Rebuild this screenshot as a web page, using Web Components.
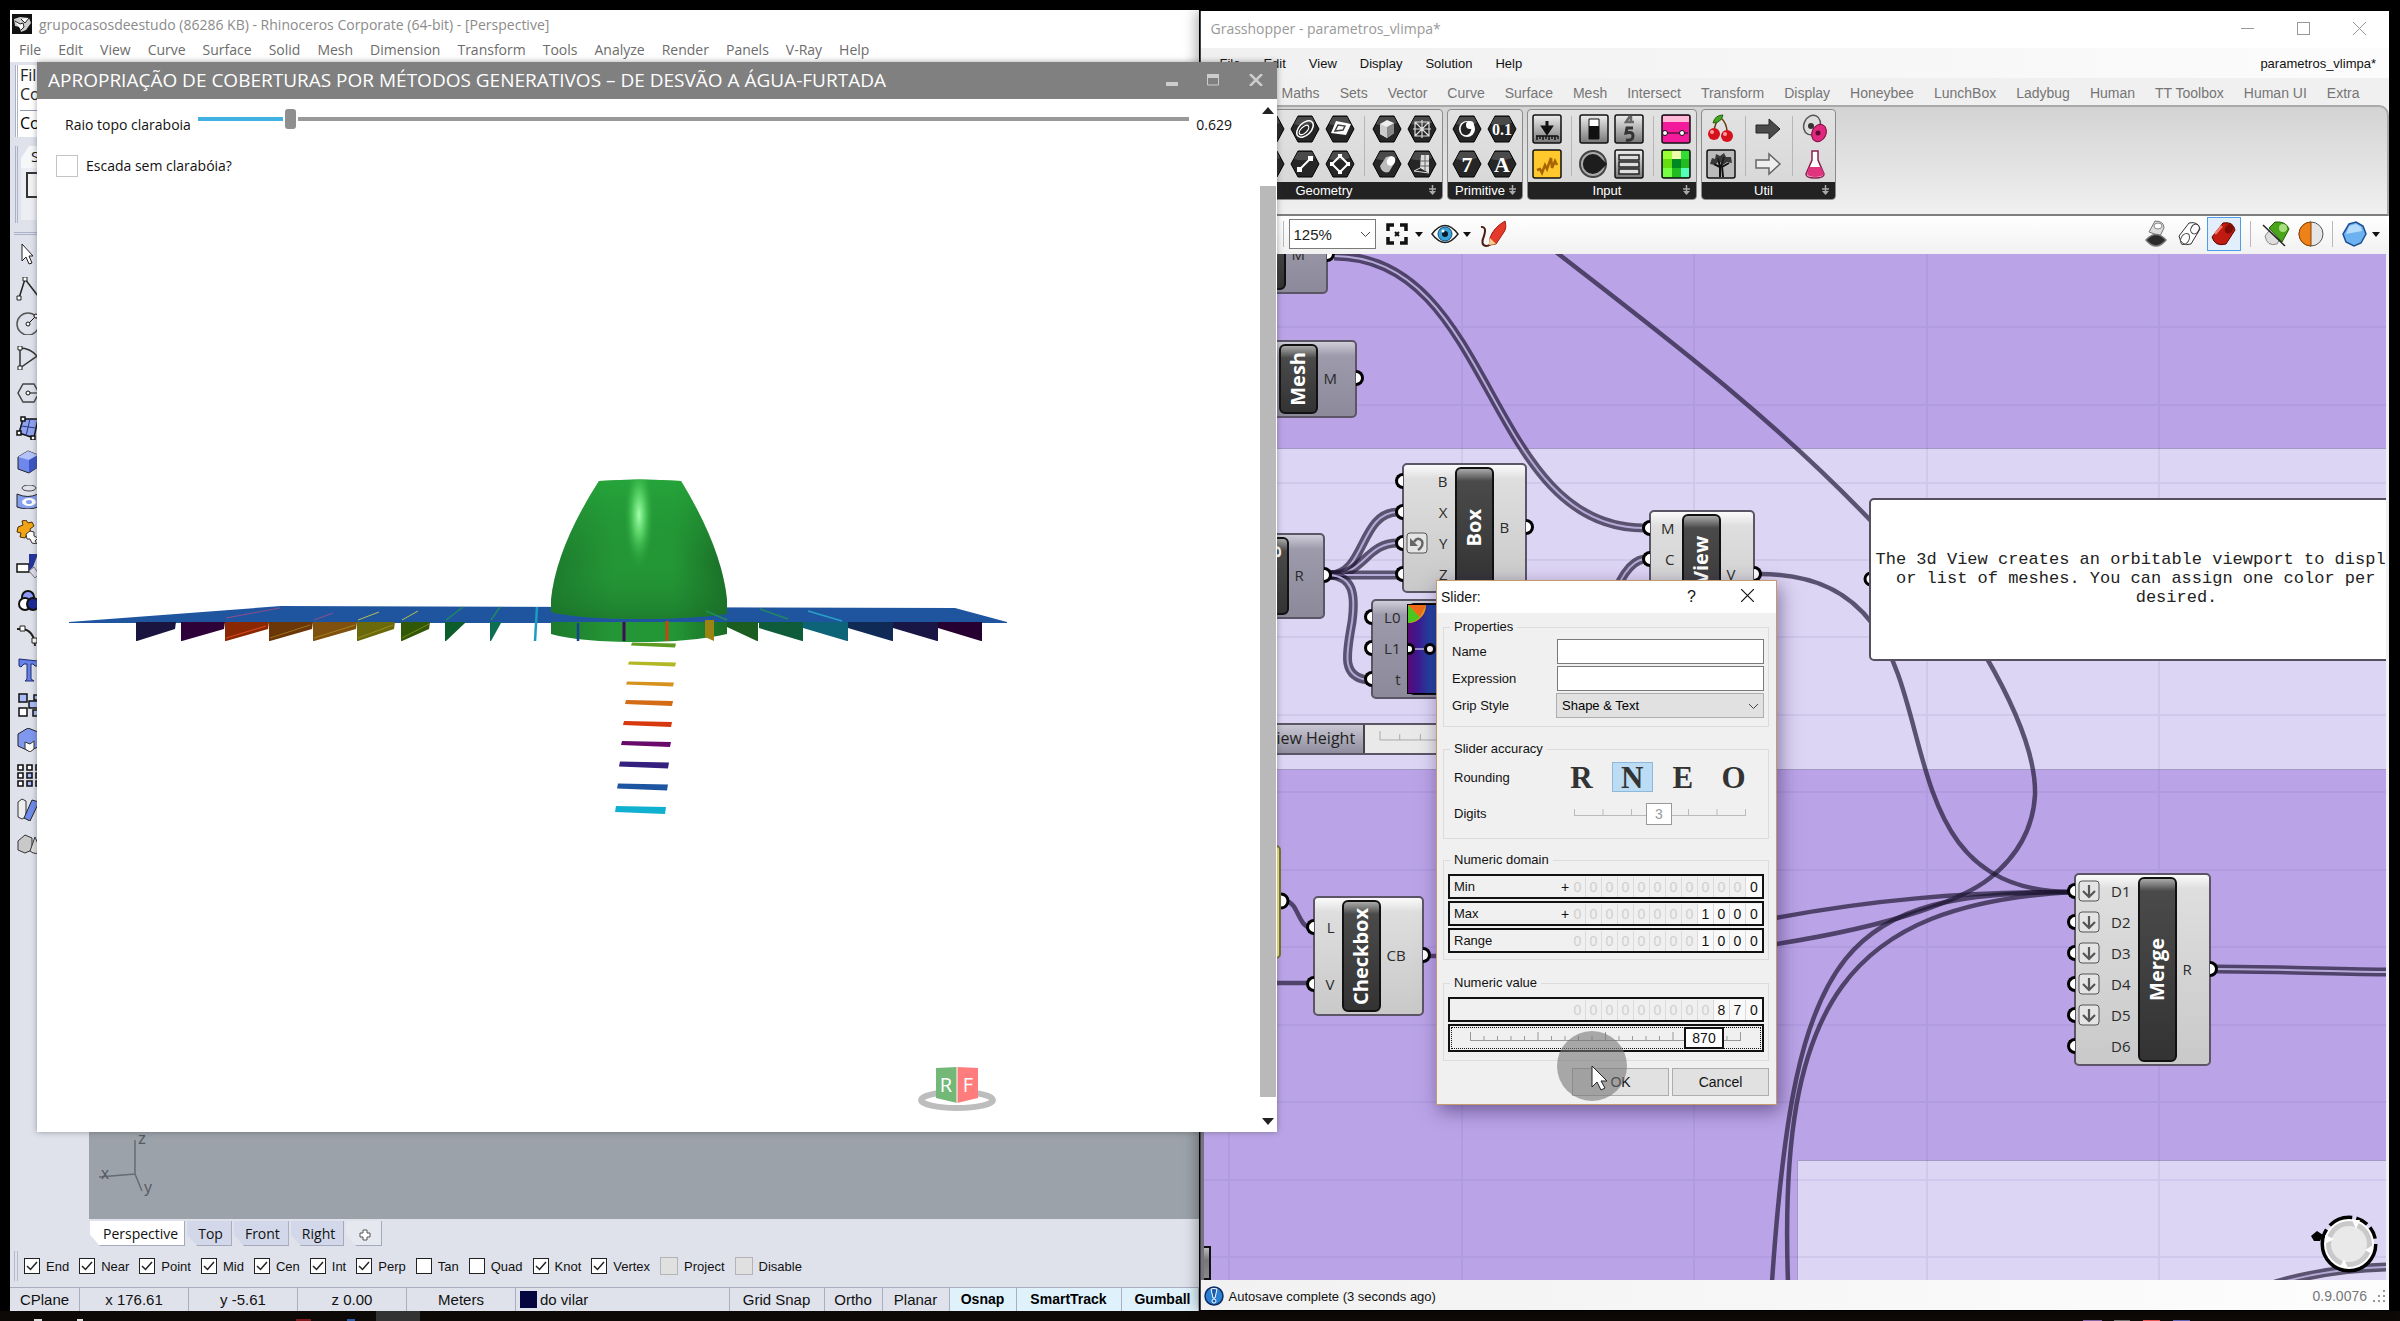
<!DOCTYPE html>
<html lang="pt">
<head>
<meta charset="utf-8">
<title>Grasshopper - parametros_vlimpa*</title>
<style>
html,body{margin:0;height:100%;background:#000;overflow:hidden}
body{font-family:"Liberation Sans",sans-serif;font-size:14px;color:#111}
</style>
</head>
<body>
<desk-top></desk-top>
<script>
const define=(name,css,html,setup)=>customElements.define(name,class extends HTMLElement{
  constructor(){
    super();
    this.attachShadow({mode:'open'});
  }
  connectedCallback(){
    if(this.shadowRoot.childNodes.length)return;
    const t=document.createElement('template');
    t.innerHTML='<style>*{box-sizing:border-box}'+css+'</style>'+(typeof html==='function'?html(this):html);
    this.shadowRoot.append(t.content.cloneNode(true));
    if(setup)setup(this);
  }
});

/* ---------- shared pieces ---------- */
define('menu-strip',`:host{display:flex;align-items:center;gap:var(--gap,17px);white-space:nowrap}
::slotted(button){all:unset;cursor:default}`,'<slot></slot>');

/* ---------- Rhino tool glyphs ---------- */
const tools=[
'<path d="M6 2V19L10 15L13 22L16 21L13 14H17Z" fill="#fff" stroke="#222"/>',
'<path d="M3 21L9 2L22 19" fill="none" stroke="#222" stroke-width="1.5"/><path d="M1 19h4v4h-4zM7 0h4v4h-4z" fill="#fff" stroke="#222"/>',
'<circle cx="12" cy="13" r="11" fill="none" stroke="#555" stroke-width="1.5"/><path d="M12 13L20 5" stroke="#111"/><circle cx="12" cy="13" r="2" fill="#fff" stroke="#111"/><circle cx="20" cy="5" r="2" fill="#fff" stroke="#111"/>',
'<path d="M4 2V22M4 2Q14 2 21 10L4 22" fill="none" stroke="#333" stroke-width="1.5"/><path d="M2 0h4v4h-4zM2 20h4v4h-4z" fill="#fff" stroke="#222"/>',
'<path d="M7 3H18L23 12L18 21H7L2 12Z" fill="none" stroke="#444" stroke-width="1.5"/><path d="M12 12H23" stroke="#111"/><circle cx="12" cy="12" r="2" fill="#fff" stroke="#111"/>',
'<path d="M7 3H22L18 22L3 17Z" fill="#8ea2ee" stroke="#111" stroke-width="1.5"/><path d="M14 3L10 20M5 10L20 12" stroke="#2a3580"/><path d="M5 1h4v4h-4zM1 15h4v4h-4zM15 20h4v4h-4z" fill="#fff" stroke="#111" stroke-width="1.5"/>',
'<path d="M2 7L12 1L22 5V17L13 23L2 19Z" fill="#6d88ea" stroke="#222"/><path d="M2 7L12 1L22 5L13 10Z" fill="#b4c4fa"/><path d="M13 10V23L22 17V5Z" fill="#3c55c4"/>',
'<ellipse cx="13" cy="3" rx="7" ry="3" fill="none" stroke="#444"/><path d="M1 9Q12 14 22 9V22Q12 26 1 22Z" fill="#86a0f0" stroke="#222"/><ellipse cx="13" cy="17" rx="7" ry="4" fill="#fff"/><ellipse cx="13" cy="17" rx="3" ry="2" fill="#86a0f0"/>',
'<path d="M2 7L7 5L6 1L10 0L12 3L16 2L18 6L14 9L15 13L11 14L9 18L4 17L5 13L1 12Z" fill="#f2a416" stroke="#4a3206"/><path d="M10 14L14 11L18 12V16L22 18L19 21L21 24L16 23L14 19L11 19Z" fill="#fff" stroke="#333"/>',
'<path d="M1 10h12v8H1z" fill="#fff" stroke="#111" stroke-width="1.5"/><path d="M13 0H22L17 13L13 17Z" fill="#25349c"/><path d="M13 17L18 13L23 20L19 24Z" fill="#dde" stroke="#777"/>',
'<circle cx="12" cy="8" r="6" fill="#8f9af5" stroke="#111" stroke-width="2"/><circle cx="9" cy="15" r="6" fill="#fff" stroke="#111" stroke-width="2"/><circle cx="17" cy="15" r="6" fill="#1d2b98" stroke="#111" stroke-width="2"/>',
'<path d="M1 5H6Q18 6 19 22" fill="none" stroke="#222" stroke-width="2"/><path d="M4 2h5v5h-5zM16 14h5v5h-5z" fill="#fff" stroke="#222"/>',
'<path d="M3 1L22 3V8L19 8L17 6H15V21L18 23H9L11 21V6H8L5 9L3 8Z" fill="#6682e8" stroke="#1e2a70"/>',
'<path d="M3 1h8v8H3zM13 8h9v7h-9z" fill="#a9bbf8" stroke="#111" stroke-width="1.5"/><path d="M3 15h8v8H3z" fill="#fff" stroke="#111" stroke-width="1.5"/><path d="M17 17h6v6h-6zM18 2h5v5h-5z" fill="#a9bbf8" stroke="#111" stroke-width="1.5"/>',
'<path d="M2 6L12 0L22 4V19L13 23L2 18Z" fill="#7f98ee" stroke="#222"/><path d="M9 14L14 16L18 13V21L14 24L9 21Z" fill="#fff" stroke="#333"/>',
'<g fill="#fff" stroke="#111" stroke-width="1.6"><path d="M2 2h5v5H2zM11 2h5v5h-5zM20 2h5v5h-5zM2 10h5v5H2zM20 10h5v5h-5zM2 18h5v5H2zM20 18h5v5h-5z"/><path fill="#a9bbf8" d="M11 10h5v5h-5zM11 18h5v5h-5z"/></g>',
'<path d="M2 5L6 2L10 4V20L6 22L2 20Z" fill="#eee" stroke="#333"/><path d="M16 3L23 5L14 24L8 21Z" fill="#6f8bea" stroke="#222"/>',
'<path d="M2 9L9 3L16 6V18L9 21L2 18Z" fill="#c9c9c9" stroke="#333"/><path d="M19 5L25 19Q20 24 14 19Z" fill="#ddd" stroke="#333"/>'
];
define('tool-rail',`:host{display:flex;flex-direction:column;justify-content:space-between;width:79px;height:614px;padding-left:6px;margin-top:7px}
button{all:unset;height:24px}svg{display:block}`,
tools.map((t,i)=>`<button aria-label="tool ${i+1}"><svg width="26" height="24" viewBox="0 0 26 24">${t}</svg></button>`).join(''));

const snaps=[['End',1],['Near',1],['Point',1],['Mid',1],['Cen',1],['Int',1],['Perp',1],['Tan',0],['Quad',0],['Knot',1],['Vertex',1],['Project',2],['Disable',2]];
define('osnap-bar',`:host{display:flex;align-items:center;gap:10px;height:37px;padding:0 0 5px 4px}
i{width:4px;height:30px;border:solid #b4b9cc;border-width:0 1px;margin-right:-4px}
label{display:flex;align-items:center;gap:6px;white-space:nowrap;font-size:13px}
input{appearance:none;margin:0;width:16px;height:16px;border:1px solid #222;background:#fff}
input:checked{background:#fff url("data:image/svg+xml,%3Csvg xmlns='http://www.w3.org/2000/svg' viewBox='0 0 14 14'%3E%3Cpath d='M2 7l3.5 3.500L12 3' fill='none' stroke='%23222' stroke-width='1.500'/%3E%3C/svg%3E")}
input.off{width:18px;height:18px;border-color:#b4b4b4;background:#e0e0e0}`,
'<i></i>'+snaps.map(([n,s])=>`<label><input type="checkbox" ${s===1?'checked':''} class="${s===2?'off':''}">${n}</label>`).join(''));

define('view-tabs',`:host{display:flex;gap:2px;height:31px;padding:2px 0 0 1px;font:14px "Open Sans",sans-serif}
button{all:unset;height:24px;padding:0 8px 0 11px;background:#d2d8e9;clip-path:polygon(0 0,100% 0,100% 100%,10px 100%,0 55%);text-align:center;line-height:23px;border-right:1px solid #a4a9bb;border-bottom:1px solid #a4a9bb}
button.on{background:#fff;padding:0 6px 0 13px}
button.add{background:#e6e8f0;padding:0 10px 0 13px}svg{vertical-align:middle}`,
`<button class="on">Perspective</button><button>Top</button><button>Front</button><button>Right</button><button class="add" aria-label="New viewport"><svg width="12" height="12" viewBox="0 0 12 12"><path d="M4 1h4v3h3v4H8v3H4V8H1V4h3z" fill="#fff" stroke="#555"/></svg></button>`);

define('rhino-status',`:host{display:grid;grid-template-columns:70px repeat(4,109px) 1fr 95px 58px 67px 67px 105px 77px;height:24px;border-top:1px solid #a9aec0;font-size:15px;line-height:23px;text-align:center}
span{border-right:1px solid #a9aec0;white-space:nowrap}
.on{background:#dff2fc;font-weight:700;font-size:14px;color:#000}.on:last-child{padding-left:6px}
.lay{display:flex;gap:3px;align-items:center;padding-left:4px}.lay i{width:17px;height:17px;background:#050540}`,
`<span>CPlane</span><span>x 176.61</span><span>y -5.61</span><span>z 0.00</span><span>Meters</span><span class="lay"><i></i>do vilar</span><span>Grid Snap</span><span>Ortho</span><span>Planar</span><span class="on">Osnap</span><span class="on">SmartTrack</span><span class="on">Gumball</span>`);

define('rhino-window',`:host{display:flex;flex-direction:column;flex:1;min-width:0;background:#dfe2eb;overflow:hidden}
header{display:flex;align-items:center;gap:7px;height:28px;padding-left:2px;background:#fff;font:14px "Open Sans",sans-serif;color:#8b8b8b;white-space:nowrap}
menu-strip{height:24px;background:#fff;padding:0 0 2px 9px;font:14px "Open Sans",sans-serif;color:#6c6c6c}
.cmd{margin:3px 8px 0 5px;border-left:3px double #a9b2c8;background:#fff;height:72px;padding-left:2px;font:16px/19px "Open Sans",sans-serif;color:#222;overflow:hidden}
.cmd p{margin:0;padding-top:1px}.cmd b{display:block;font-weight:400;color:#000;border-top:1px solid #8d97b0;line-height:24px;margin-top:6px}
.bar{margin:9px 0 0 5px;border-left:3px double #a9b2c8;height:77px;position:relative;padding-left:3px}
.bar span{display:block;width:70px;height:22px;padding-left:10px;background:#f6f7fb;clip-path:polygon(8px 0,100% 0,100% 100%,0 100%,0 12px);font:15px/20px "Open Sans",sans-serif}
.bar div{height:52px;background:#eceef4;padding:4px 0 0 5px}
.bar button{all:unset;width:24px;height:22px;border:2px solid #333;background:#f3f3f3}
.body{flex:1;display:flex;border-top:3px double #a9b2c8;margin:9px 0 0 4px;min-height:0}
tool-rail{margin-left:-4px}
.right{flex:1;display:flex;flex-direction:column;min-width:0}
.vp{flex:1;background:#9ca2aa;display:flex;align-items:flex-end}.vp svg{overflow:visible}
`,`<header><svg width="20" height="20" viewBox="0 0 20 20"><path d="M0 0h20v20H0z" fill="#111"/><path d="M2 5L8 3L17 4L19 9L14 16L9 18L8 13L3 12Z" fill="#ccc"/><path d="M3 7l5 3 3-1 1 4-3 3M9 5l4 4 4-5" stroke="#222" fill="#fff"/></svg><span>grupocasosdeestudo (86286 KB) - Rhinoceros Corporate (64-bit) - [Perspective]</span></header>
<menu-strip>${'File,Edit,View,Curve,Surface,Solid,Mesh,Dimension,Transform,Tools,Analyze,Render,Panels,V-Ray,Help'.split(',').map(m=>`<button>${m}</button>`).join('')}</menu-strip>
<div class="cmd"><p>Fil<br>Co</p><b>Co</b></div>
<div class="bar"><span>S</span><div><button aria-label="new"></button></div></div>
<div class="body"><tool-rail></tool-rail><div class="right"><div class="vp"><svg width="80" height="86" viewBox="89 1133 80 86"><path d="M135 1140V1174L99 1177M135 1174L142 1191" fill="none" stroke="#666c74" stroke-width="1.500"/><g fill="#565b62" font-family="Liberation Sans" font-size="16"><text x="138" y="1144">z</text><text x="101" y="1179">x</text><text x="144" y="1193">y</text></g></svg></div>
<view-tabs></view-tabs></div></div>
<osnap-bar></osnap-bar><rhino-status></rhino-status>`);

/* ---------- Grasshopper ribbon ---------- */
const hex=s=>`<svg width="30" height="28" viewBox="0 0 30 28"><path d="M8 1H22L29 14L22 27H8L1 14Z" fill="#262626" stroke="#000"/><path d="M8 2H22L25 8Q14 12 4 9Z" fill="#4a4a4a"/>${s}</svg>`;
const sq=(s,f='#8c8c8c')=>`<svg width="30" height="30" viewBox="0 0 30 30"><defs><linearGradient id="g" x2="0" y2="1"><stop stop-color="#eee"/><stop offset="1" stop-color="#777"/></linearGradient></defs><rect x="1" y="1" width="28" height="28" rx="2" fill="${f}" stroke="#111" stroke-width="1.500"/>${s}</svg>`;
const pl=s=>`<svg width="30" height="30" viewBox="0 0 30 30">${s}</svg>`;
const I={
circ:hex('<circle cx="15" cy="14" r="6" fill="none" stroke="#fff" stroke-width="2"/>'),
crv:hex('<path d="M8 20Q15 22 20 8M8 20L12 10" fill="none" stroke="#fff" stroke-width="2"/>'),
ell:hex('<ellipse cx="15" cy="14" rx="10" ry="6" transform="rotate(-45 15 14)" fill="none" stroke="#fff" stroke-width="1.500"/><ellipse cx="14" cy="15" rx="6" ry="3" transform="rotate(-45 14 15)" fill="none" stroke="#fff" stroke-width="1.300"/>'),
line:hex('<path d="M10 19L20 9" stroke="#fff" stroke-width="2"/><path d="M7 17h5v5H7zM18 6h5v5h-5z" fill="#fff"/>'),
plane:hex('<path d="M6 18L11 6L26 9L21 20Z" fill="#fff"/><path d="M10 16L13 10L20 11L18 15Z" fill="none" stroke="#444" stroke-width="1.500"/>'),
rect:hex('<path d="M15 6L23 14L15 22L7 14Z" fill="none" stroke="#fff" stroke-width="2"/><path d="M13 4h4v4h-4zM13 20h4v4h-4zM5 12h4v4h-4zM21 12h4v4h-4z" fill="#fff"/>'),
box:hex('<path d="M8 9L15 5L22 8V18L15 23L8 19Z" fill="#eee"/><path d="M8 9L15 12V23L8 19Z" fill="#ccc"/><path d="M15 12L22 8V18L15 23Z" fill="#888"/>'),
mesh:hex('<path d="M8 7h14v14H8zM15 5v18M6 14h18M8 7l14 14M22 7L8 21" fill="none" stroke="#ddd" stroke-width="1.200"/>'),
brep:hex('<path d="M8 16L14 7Q23 4 23 12L17 22Q10 24 8 16Z" fill="#bbb"/><ellipse cx="19" cy="11" rx="4" ry="5" transform="rotate(30 19 11)" fill="#fff"/>'),
srf:hex('<path d="M13 18L14 5H22V23Z" fill="#ddd"/><path d="M13 18L7 21L22 23" fill="none" stroke="#ddd"/><path d="M18 5V21M14 11H22M13 16H22" stroke="#666"/>'),
bool:hex('<circle cx="15" cy="14" r="8" fill="#fff"/><path d="M17 7a7 7 0 0 0-8 9a5 5 0 0 0 9 2q3-5-1-11" fill="#222"/><circle cx="18" cy="10" r="4" fill="#fff"/>'),
num:hex('<text x="15" y="20" fill="#fff" font-family="Liberation Serif" font-weight="700" font-size="16" text-anchor="middle">0.1</text>'),
seven:hex('<text x="15" y="22" fill="#fff" font-family="Liberation Serif" font-weight="700" font-size="22" text-anchor="middle">7</text>'),
a:hex('<text x="15" y="22" fill="#fff" font-family="Liberation Serif" font-weight="700" font-size="22" text-anchor="middle">A</text>'),
btn:sq('<path d="M15 7V15M11 13L15 19L19 13Z" stroke="#111" stroke-width="3"/><path d="M4 22H26M5 22v4M8 22v3M11 22v4M14 22v3M17 22v4M20 22v3M23 22v4M26 22v3" stroke="#111" stroke-width="1.500"/>','url(#g)'),
graf:sq('<path d="M5 21L8 20L10 24L13 16L15 20L19 9L20 19L23 12L25 16" fill="none" stroke="#a86400" stroke-width="2.500"/>','#ffc82c'),
sld:sq('<path d="M10 5H20V25H10Z" fill="#fff" stroke="#111"/><path d="M10 12H20V25H10Z" fill="#111"/>','url(#g)'),
dig:sq('<path d="M16 2L12 8H20M17 2V9" fill="none" stroke="#666" stroke-width="2.500"/><path d="M19 14H13L12 19Q19 17 19 22T12 26" fill="none" stroke="#333" stroke-width="3"/>','url(#g)'),
knob:pl('<circle cx="14" cy="15" r="13" fill="#aaa" stroke="#444" stroke-width="2"/><path d="M21 8L28 15L21 22A10 10 0 1 1 21 8" fill="#1d1d1d"/>'),
list:sq('<path d="M5 6h20v5H5zM5 13h20v5H5zM5 20h20v5H5z" fill="#ddd" stroke="#222" stroke-width="1.500"/>','url(#g)'),
grad:sq('<path d="M2 2H28V8H2Z" fill="#fcd" opacity=".9"/><path d="M3 19H27" stroke="#111"/><circle cx="4" cy="19" r="2.500" fill="#fff" stroke="#111"/><circle cx="21" cy="19" r="2.500" fill="#fff" stroke="#111"/>','#f31a9c'),
sw:sq('<path d="M2 2h9v8H2z" fill="#9f3"/><path d="M11 2h9v8h-9z" fill="#efa"/><path d="M20 2h8v8h-8z" fill="#3d3"/><path d="M2 10h9v9H2z" fill="#6d1"/><path d="M11 10h9v9h-9z" fill="#082"/><path d="M2 19h9v9H2z" fill="#7f4"/><path d="M20 19h8v9h-8z" fill="#5fb"/>','#2b2'),
cherry:pl('<path d="M8 17Q9 9 14 3Q21 9 21 18" fill="none" stroke="#6a3d12" stroke-width="1.500"/><path d="M17 1Q9 1 7 9Q15 9 17 1" fill="#43a51e" stroke="#256010"/><circle cx="8" cy="20" r="6" fill="#d5121b"/><circle cx="21" cy="22" r="6" fill="#d5121b"/><circle cx="6" cy="18" r="2" fill="#ff9a9a"/><circle cx="19" cy="20" r="2" fill="#ff9a9a"/>'),
tree:sq('<path d="M14 28L14 18L8 15M14 18L12 9M15 18L18 8M16 18L23 14M16 17L17 28Z" stroke="#111" stroke-width="2" fill="none"/><path d="M4 15L6 9L9 10L10 5L14 7L18 4L20 8L25 8L26 14L21 13L17 16L13 12L9 16Z" fill="#222" fill-opacity=".85"/>','#bbb'),
arrd:pl('<path d="M3 11H16V5L27 15L16 25V19H3Z" fill="#4a4a4a" stroke="#222"/>'),
arrl:pl('<path d="M3 11H16V5L27 15L16 25V19H3Z" fill="#eee" stroke="#666" stroke-width="1.500"/>'),
eggs:pl('<ellipse cx="12" cy="11" rx="8" ry="10" transform="rotate(25 12 11)" fill="#ddd" stroke="#555" stroke-width="1.500"/><circle cx="11" cy="12" r="3" fill="#333"/><ellipse cx="19" cy="19" rx="7" ry="9" transform="rotate(25 19 19)" fill="#e0287e" stroke="#7a0e40"/><circle cx="18" cy="19" r="2.500" fill="#5e0a30"/>'),
flask:pl('<path d="M12 2H18V11L24 25Q24 29 15 29Q6 29 6 25L12 11Z" fill="#fff" stroke="#8a1f4e" stroke-width="1.500"/><path d="M9 18H21L24 25Q22 28 15 28Q8 28 7 25Z" fill="#e0347f"/>')
};
define('ribbon-group',`:host{display:flex;flex-direction:column;height:91px;border:1px solid #8a8a8a;border-radius:4px;background:linear-gradient(#e2e2e2,#d6d6d6);overflow:hidden}
div{flex:1;display:flex;align-items:center;justify-content:center;padding:0 2px}
section{display:grid;grid-auto-flow:column;grid-template-rows:35px 35px;grid-auto-columns:35px}
button{all:unset;display:flex;align-items:center;justify-content:center}
i{width:1px;height:60px;background:#b6b6b6;margin:0 5px 0 6px}
footer{display:flex;align-items:center;height:17px;background:#222;color:#fff;font-size:13px;padding:0 5px}
footer span{flex:1;text-align:center}`,el=>{
 const sets=el.getAttribute('icons').split('|');
 return `<div>${sets.map(s=>`<section>${s.split(',').map(k=>`<button aria-label="${k}">${I[k]}</button>`).join('')}</section>`).join('<i></i>')}</div>
 <footer><span><slot></slot></span><svg width="9" height="11" viewBox="0 0 9 11"><path d="M4.500 0V9M1 4h7" stroke="#aaa" fill="none" stroke-width="1.500"/><path d="M1 6h7L4.500 10z" fill="#aaa"/></svg></footer>`;});

const car=(f,s='#444')=>`<path d="M3 16L13 3Q22 1 24 9L15 24Q5 27 3 16Z" fill="${f}" stroke="${s}"/><ellipse cx="19" cy="9" rx="4" ry="5" transform="rotate(30 19 9)" fill="#fff" fill-opacity=".5" stroke="${s}"/>`;
const down='<svg width="8" height="5" viewBox="0 0 8 5"><path d="M0 0h8L4 5z" fill="#111"/></svg>';
define('gh-toolbar',`:host{display:flex;align-items:center;height:38px;background:linear-gradient(#fff,#f1f1f1);padding:0 8px 2px 82px}
button{all:unset;display:flex;align-items:center;justify-content:center;width:34px;height:34px}
.combo{position:relative;margin:0 4px 0 5px}
select{appearance:none;width:87px;height:30px;border:1px solid #7a7a7a;background:#fff;font:15px "Liberation Sans";padding:0 4px;color:#222;display:block}
.combo svg{position:absolute;right:5px;top:12px}
i{width:1px;height:26px;background:#b9b9b9}.sp{flex:1}
.on{border:1px solid #4d9ee8;background:#e2effb;width:32px;height:32px}
.dd{width:10px;margin-right:4px}`,
`<i></i><div class="combo"><select aria-label="Zoom"><option>125%</option></select><svg width="11" height="7" viewBox="0 0 11 7"><path d="M1 1l4.500 4.500L10 1" fill="none" stroke="#444"/></svg></div>
<button aria-label="Zoom extents"><svg width="24" height="24" viewBox="0 0 24 24"><path d="M3 9V3H9M15 3H21V9M21 15V21H15M9 21H3V15" fill="none" stroke="#111" stroke-width="3.500"/><path d="M10 10l4 4M14 10l-4 4" stroke="#111" stroke-width="2"/></svg></button><button class="dd" aria-label="more">${down}</button>
<button aria-label="Preview"><svg width="28" height="20" viewBox="0 0 28 20"><path d="M1 10Q14 -7 27 10Q14 27 1 10Z" fill="#fff" stroke="#222" stroke-width="1.500"/><circle cx="14" cy="10" r="7" fill="#3aa4dc" stroke="#134a78"/><circle cx="14" cy="10" r="3" fill="#0b1826"/><circle cx="12" cy="7" r="1.500" fill="#fff"/></svg></button><button class="dd" aria-label="more">${down}</button>
<button aria-label="Sketch"><svg width="28" height="28" viewBox="0 0 28 28"><path d="M2 7Q8 6 5 16Q1 25 7 26Q12 26 14 20" fill="none" stroke="#4a1c12" stroke-width="2"/><path d="M11 18Q14 8 26 1Q28 8 25 12L17 24L11 25Z" fill="#e33a2c" stroke="#a3190e"/><path d="M11 18L10 25L17 24Z" fill="#f4cf8e"/></svg></button>
<span class="sp"></span>
<button aria-label="No preview"><svg width="26" height="28" viewBox="0 0 26 28"><path d="M6 12L12 1Q21 1 21 8L17 16Z" fill="#ddd" stroke="#777"/><ellipse cx="15" cy="6" rx="4" ry="3" fill="#fff" stroke="#888"/><path d="M3 20Q13 9 23 20Q13 32 3 20Z" fill="#2b2b2b" stroke="#777" stroke-width="1.500"/></svg></button>
<button aria-label="Wireframe"><svg width="28" height="28" viewBox="0 0 28 28">${car('#fff','#333')}<ellipse cx="9" cy="19" rx="4" ry="6" transform="rotate(30 9 19)" fill="none" stroke="#555"/></svg></button>
<button class="on" aria-label="Shaded"><svg width="28" height="28" viewBox="0 0 28 28"><path d="M2 17L13 3Q23 1 25 10L16 24Q5 27 2 17Z" fill="#c11a10" stroke="#5a0802"/><ellipse cx="19" cy="9" rx="4" ry="5" transform="rotate(30 19 9)" fill="#7e0d06"/><path d="M5 14L12 6" stroke="#f6786e" stroke-width="2.500"/></svg></button>
<i style="margin:0 9px"></i>
<button aria-label="Selected only"><svg width="30" height="28" viewBox="0 0 30 28">${car('#ddd','#888')}<path d="M7 8L13 2Q24 1 27 9L20 22Z" fill="#4ba51c" stroke="#235c08"/><ellipse cx="21" cy="8" rx="4" ry="4" fill="#a6e07c"/><path d="M1 5L23 26" stroke="#222" stroke-width="1.500"/></svg></button>
<button aria-label="Document preview"><svg width="28" height="28" viewBox="0 0 28 28"><circle cx="14" cy="14" r="12" fill="#e6e6e6" stroke="#555"/><path d="M14 2A12 12 0 0 0 14 26Z" fill="#ee8218" stroke="#8a4300"/></svg></button>
<i style="margin:0 4px"></i>
<button aria-label="Mesh quality"><svg width="26" height="26" viewBox="0 0 26 26"><path d="M8 3L15 1L22 5L25 13L20 22L13 25L5 21L2 13Z" fill="#6cb1f0" stroke="#1d4f92" stroke-width="1.500"/><path d="M8 5L15 3L20 6L21 10L5 13Z" fill="#b4dbfb"/></svg></button><button class="dd" style="margin:0" aria-label="more">${down}</button>`);

/* ---------- Grasshopper canvas ---------- */
const flag=k=>k==='*'?'<svg width="22" height="22" viewBox="0 0 22 22"><rect x="1" y="1" width="20" height="20" rx="3" fill="#e4e4e4" stroke="#555"/><path d="M4 6V14H12Z" fill="#666"/><path d="M8 10Q12 4 16 9Q18 14 12 18" fill="none" stroke="#666" stroke-width="2.500"/></svg>'
 :'<svg width="22" height="22" viewBox="0 0 22 22"><rect x="1" y="1" width="20" height="20" rx="3" fill="#e4e4e4" stroke="#555"/><path d="M11 5V17M5 11L11 17L17 11" fill="none" stroke="#555" stroke-width="2.200"/></svg>';
define('gh-node',`:host{position:absolute;display:flex;border:2px solid #5b5566;border-radius:5px;background:linear-gradient(#fbfbfb,#dedede 14px,#c9c9c9);font:15px "Open Sans",sans-serif;color:#2b2b2b;padding:0 0 2px}
:host([kind=param]){background:linear-gradient(#cfcdd8,#9d9bab 14px,#8b899a)}
.col{display:flex;flex-direction:column}.in{width:var(--in,0)}.out{flex:1}
.row{flex:1;display:flex;align-items:center;justify-content:flex-end;position:relative;padding-right:7px;min-height:0}
.out .row{justify-content:flex-start;padding:0 0 0 6px}
.row svg{position:absolute;left:2px}
.p{position:absolute;width:8px;height:16px;border:3px solid #000;background:#fff}
.in .p{left:-9px;border-right:0;border-radius:8px 0 0 8px}
.out .p{right:-9px;border-left:0;border-radius:0 8px 8px 0}
.cap{width:39px;margin:2px 0 0;border:2px solid #111;border-radius:6px;background:linear-gradient(#aaa,#4a4a4a 12px,#333);color:#fff;font-weight:700;font-size:20px;display:flex;align-items:center;justify-content:center}
.cap span{writing-mode:vertical-rl;transform:rotate(180deg);white-space:nowrap;line-height:1}`,
el=>{const g=n=>el.getAttribute(n)||'';
 const ins=g('in')?g('in').split(','):[],outs=g('out').split(',');
 return `<div class="col in">${ins.map(s=>{const f=/[*v]$/.test(s)?s.slice(-1):'';const n=f?s.slice(0,-1):s;
  return `<div class="row">${n?'<i class="p"></i>':''}${f?flag(f):''}<span>${n}</span></div>`}).join('')}</div>
 <div class="cap"><span><slot></slot></span></div>
 <div class="col out">${outs.map(s=>`<div class="row"><span>${s}</span><i class="p"></i></div>`).join('')}</div>`},
el=>{const c=el.getRootNode().host,a=n=>+el.getAttribute(n);
 el.style.left=a('x')-c.viewX+'px';el.style.top=a('y')-c.viewY+'px';el.style.width=a('w')+'px';el.style.height=a('h')+'px';
 if(a('inw'))el.style.setProperty('--in',a('inw')+'px');});

const dbl=d=>`<path d="${d}" stroke="#1c1530" stroke-opacity=".68" stroke-width="9"/><path d="${d}" stroke="#b5a9d8" stroke-width="2"/>`;
const one=d=>`<path d="${d}" stroke="#1c1530" stroke-opacity=".68" stroke-width="4.500"/>`;
const vx=[1229,1462,1694,1927,2159],hy=[327,405,483,560,637,715,792,870,947,1025,1102,1180,1257];
const compass='<g transform="translate(2349 1244)"><circle r="26" fill="none" stroke="#000" stroke-width="5" stroke-dasharray="96 5 24 4 12 4 12 6"/><path d="M-38 -8l6 -5l6 4l-3 6l-6 0z"/><circle r="24" fill="#c9c9c9" stroke="#fff" stroke-width="2"/><circle r="18" fill="#e9e9e9"/><path d="M3 -24h8l-4 9zM-24 -9l9 4l-9 5zM24 1l-8 5l7 4zM-9 23l4 -8l4 9z" fill="#fff"/></g>';
class GhCanvas extends HTMLElement{
 constructor(){super();this.viewX=1205;this.viewY=254;const r=this.attachShadow({mode:'open'});
 r.innerHTML=`<style>*{box-sizing:border-box}:host{display:block;position:relative;flex:1;overflow:hidden;background:#baa4e7;margin:0 3px 0 0;border-left:3px solid #77727f}
 svg.w{position:absolute;left:0;top:0;display:block}
 .panel{position:absolute;left:665px;top:244px;width:616px;height:163px;background:#fff;border:2px solid #55505f;border-radius:5px;display:flex;align-items:center;justify-content:center;text-align:center;font:17px/19px "Liberation Mono",monospace;color:#222;white-space:pre;padding-bottom:2px}
 .grad{position:absolute;left:203px;top:350px;width:60px;height:90px;border:1px solid #000;background:linear-gradient(90deg,#5a0a78,#3d1a90 10px,#2243a0 22px)}
 .sl{position:absolute;left:-14px;top:469px;width:300px;height:32px;border:2px solid #5b5566;display:flex;background:#e9e9e9;font:16px "Open Sans";color:#222}
 .sl span{width:176px;text-align:right;padding-right:8px;line-height:27px;background:linear-gradient(#c9c7d2,#8f8d9e);border-right:2px solid #444}
 .sl svg{margin:6px 0 0 14px}
 .yel{position:absolute;left:20px;top:591px;width:57px;height:114px;background:#f6ee86;border:2px solid #77713c;border-radius:5px}
 .stub{position:absolute;left:-10px;top:992px;width:17px;height:34px;border:2px solid #111;background:linear-gradient(#bbb,#777 40%,#888)}
 </style>
 <svg class="w" width="1182" height="1026" viewBox="1204 254 1182 1026"><path d="M1204 448H2386V769H1204zM1797 1160H2386V1280H1797z" fill="#ddd5f4"/><path d="M1204 448.500H2386M1204 769.500H2386M1797.500 1280V1160.500H2386" stroke="#a498c4" fill="none"/>
 <path d="${vx.map(x=>`M${x} 254V1280`).join('')}${hy.map(y=>`M1204 ${y}H2386`).join('')}" stroke="#503c8c" stroke-opacity=".08" stroke-width="2"/>
 <g fill="none">
 ${dbl('M1334 256C1495 256 1485 528 1644 528')}${dbl('M1611 606C1618 580 1630 561 1644 559')}
 ${dbl('M1330 575C1365 575 1360 512 1398 512')}${dbl('M1330 575C1365 575 1365 543 1398 543')}${dbl('M1330 575H1398')}${dbl('M1330 575C1352 577 1356 592 1352 622C1347 652 1340 677 1368 680')}
 ${one('M1556 252C1660 333 1770 415 1872 522')}${one('M1760 574C1987 574 1843 892 2072 892')}
 ${one('M1985 655C2020 715 2036 760 2035 795C2033 830 2015 858 1990 878S1900 925 1770 945')}${one('M1770 919C1870 900 1960 892 2072 892')}
 ${one('M1772 1282C1795 940 1845 893 2072 892')}${one('M1788 1282C1778 1000 1848 905 2072 892')}
 ${one('M1286 901C1298 903 1298 925 1310 928')}${one('M1270 983H1310')}${one('M1426 956H1440')}
 ${dbl('M2216 969C2280 969 2330 972 2390 972')}${dbl('M2275 1284Q2330 1268 2390 1267')}
 </g>${compass}
 <g fill="#fff" stroke="#000" stroke-width="3"><circle cx="1871" cy="579" r="6"/><circle cx="1281" cy="901" r="7"/></g></svg>
 <gh-node kind="param" x="1200" y="216" w="129" h="78" inw="46" out="M">Mesh</gh-node>
 <gh-node kind="param" x="1230" y="340" w="128" h="78" inw="48" out="M">Mesh</gh-node>
 <gh-node kind="param" x="1200" y="533" w="126" h="86" inw="49" out="R">String</gh-node>
 <gh-node x="1403" y="463" w="125" h="130" inw="51" in="B,X,Y*,Z" out="B">Box</gh-node>
 <gh-node kind="param" x="1372" y="599" w="130" h="100" inw="35" in="L0,L1,t" out=""></gh-node>
 <div class="grad"><svg width="60" height="90" viewBox="0 0 60 90"><path d="M0 0H18A18 18 0 0 1 0 18Z" fill="#e8a01c"/><path d="M0 0V18Q7 17 12 12Z" fill="#4bc81e"/><path d="M0 0L12 12L18 0Z" fill="#ef6a18"/><path d="M0 44H30" stroke="#fff"/><g fill="#fff" stroke="#000" stroke-width="3"><circle cx="1" cy="44" r="4.500"/><circle cx="22" cy="44" r="4.500"/></g></svg></div>
 <div class="sl"><span>View Height</span><svg width="110" height="14" viewBox="0 0 110 14"><path d="M1 0V9H110M21 3v6M42 3v6M62 3v6" fill="none" stroke="#aaa"/></svg></div>
 <gh-node x="1650" y="510" w="106" h="130" inw="31" in="M,C,," out="V">3d View</gh-node>
 <div class="yel"></div>
 <gh-node x="1314" y="896" w="111" h="120" inw="27" in="L,V" out="CB">Checkbox</gh-node>
 <gh-node x="2075" y="873" w="137" h="193" inw="62" in="D1v,D2v,D3v,D4v,D5v,D6" out="R">Merge</gh-node>
 <div class="panel">The 3d View creates an orbitable viewport to display a mesh
or list of meshes. You can assign one color per mesh if
desired.</div><div class="stub"></div>`;}
}
customElements.define('gh-canvas',GhCanvas);

define('gh-window',`:host{display:flex;flex-direction:column;flex:1;min-width:0;margin:1px 0;background:#f0f0f0;border-left:1px solid #444;box-shadow:-4px 0 12px rgba(0,0,0,.3);position:relative;overflow:hidden}
header{display:flex;align-items:center;height:37px;background:#fff;padding:0 23px 2px 10px;font:14px "Open Sans",sans-serif;color:#999}
header span{flex:1}header button{all:unset;margin-left:43px;display:flex}
.m{display:flex;align-items:center;height:30px;background:linear-gradient(90deg,#f0f0f0,#fcfcfc);padding:0 13px 0 19px;font-size:13px}
.m menu-strip{flex:1;--gap:23px}
.t{height:27px;padding-left:81px;color:#757575;--gap:20px;font-size:14px;padding-top:2px}
.r{display:flex;gap:4px;height:111px;padding:2px 0 0 14px;border-top:2px solid #a9a9a9;border-bottom:2px solid #7e7e7e;border-right:2px solid #a9a9a9;border-top-right-radius:10px;background:linear-gradient(#d3d3d3,#f0f0f0)}
footer{display:flex;align-items:center;gap:5px;height:30px;background:linear-gradient(90deg,#f1f1f1,#fdfdfd);padding:2px 3px 0 3px;font-size:13px}
footer span{flex:1}footer em{font-style:normal;color:#777;font-size:14px}`,
`<header><span>Grasshopper - parametros_vlimpa*</span>
<button aria-label="Minimize"><svg width="13" height="13"><path d="M0 6.500H13" stroke="#999"/></svg></button><button aria-label="Maximize"><svg width="13" height="13"><rect x=".5" y=".5" width="12" height="12" fill="none" stroke="#999"/></svg></button><button aria-label="Close"><svg width="13" height="13"><path d="M0 0L13 13M13 0L0 13" stroke="#999"/></svg></button></header>
<div class="m"><menu-strip>${'File,Edit,View,Display,Solution,Help'.split(',').map(m=>`<button>${m}</button>`).join('')}</menu-strip><span>parametros_vlimpa*</span></div>
<menu-strip class="t">${'Maths,Sets,Vector,Curve,Surface,Mesh,Intersect,Transform,Display,Honeybee,LunchBox,Ladybug,Human,TT Toolbox,Human UI,Extra'.split(',').map(m=>`<button>${m}</button>`).join('')}</menu-strip>
<div class="r"><ribbon-group icons="circ,crv,circ,crv,ell,line,plane,rect|box,brep,mesh,srf">Geometry</ribbon-group><ribbon-group icons="bool,seven,num,a">Primitive</ribbon-group><ribbon-group icons="btn,graf|sld,knob,dig,list|grad,sw">Input</ribbon-group><ribbon-group icons="cherry,tree|arrd,arrl|eggs,flask">Util</ribbon-group></div>
<gh-toolbar></gh-toolbar><gh-canvas></gh-canvas>
<footer><svg width="20" height="20" viewBox="0 0 20 20"><circle cx="10" cy="10" r="9" fill="#2a7fd0" stroke="#0e2c66" stroke-width="1.500"/><path d="M7 3Q10 2 13 3L11 12H9z" fill="#1a58a8" stroke="#fff"/><circle cx="10" cy="15" r="2" fill="#1a58a8" stroke="#fff"/></svg><span>Autosave complete (3 seconds ago)</span><em>0.9.0076</em><svg width="14" height="16" viewBox="0 0 14 16"><path d="M11 2h2v2h-2zM6 7h2v2H6zM11 7h2v2h-2zM1 12h2v2H1zM6 12h2v2H6zM11 12h2v2h-2z" fill="#999"/></svg></footer>`);

/* ---------- Human UI window ---------- */
const poly=(p,f)=>`<polygon points="${p}" fill="${f}"/>`;
const finsL=[[136,176,'#1a1540'],[181,225,'#2e0138'],[225,269,'#8a2804'],[269,313,'#6b3608'],[313,357,'#80500f'],[357,395,'#6a690c'],[401,430,'#305806'],[445,466,'#0d5c2c'],[490,502,'#0d6e54']];
const finsR=[[727,758,'#1b5c20'],[759,803,'#0e5c3a'],[803,848,'#0d6478'],[848,893,'#0f2a55'],[893,938,'#191545'],[938,982,'#260030']];
const steps=[[645,631,676,3,'#5f9a22'],[664,628,676,3,'#b2b825'],[684,626,674,3,'#d6921e'],[703,625,673,4,'#d46c16'],[724,623,672,4,'#d8380e'],[744,621,671,4,'#670a6c'],[765,619,669,5,'#35207e'],[787,617,668,5,'#1d55a0'],[810,615,666,6,'#10b0d0']];
const dome='M599 481Q640 478 681 481Q722 548 727 600V614Q690 619 639 619Q580 619 551 612V600Q556 548 599 481Z';
define('model-view',':host{display:block;overflow:hidden}svg{display:block}',
`<svg width="1222" height="946" viewBox="37 186 1222 946"><defs>
<linearGradient id="d"><stop stop-color="#1d7a2c"/><stop offset=".35" stop-color="#249636"/><stop offset=".7" stop-color="#239635"/><stop offset="1" stop-color="#1a6c26"/></linearGradient>
<linearGradient id="v" x2="0" y2="1"><stop stop-color="#26a83c" stop-opacity=".8"/><stop offset=".6" stop-color="#219034" stop-opacity="0"/><stop offset="1" stop-color="#1a6e28" stop-opacity=".6"/></linearGradient>
<radialGradient id="h"><stop stop-color="#a6ffb0"/><stop offset=".4" stop-color="#5fdc6c" stop-opacity=".8"/><stop offset="1" stop-color="#25a038" stop-opacity="0"/></radialGradient>
<clipPath id="c"><path d="${dome}"/></clipPath></defs>
${poly('69,622 281,606 955,608 1007,622 1007,623 69,623','#1f559f')}
<path d="M551 622H727V634Q690 642 639 642Q580 642 551 634Z" fill="url(#d)"/>
<path d="${dome}" fill="url(#d)"/><path d="${dome}" fill="url(#v)"/>
<ellipse cx="639" cy="515" rx="15" ry="55" fill="url(#h)" clip-path="url(#c)"/>
${finsL.map(([a,b,c])=>poly(`${a},622 ${b},622 ${b-1},${b-a>25?629:623} ${a+1},641 ${a},641`,c)).join('')}
${finsR.map(([a,b,c])=>poly(`${a},622 ${b},622 ${b},641 ${b-1},641 ${a},${b-a>40?628:627}`,c)).join('')}
<path d="M270 638L310 625M314 638L355 625M358 638L393 625M402 638L429 624" stroke="#c8b030" stroke-opacity=".5"/><path d="M226 638L266 626" stroke="#e04a20"/>
<path d="M226 618L280 608M314 620L333 613" stroke="#c04a80" stroke-opacity=".7"/><path d="M358 620L379 612M402 620L418 611" stroke="#b8c050"/><path d="M446 620L463 607M491 620L500 607M706 611L727 620M760 609L788 619" stroke="#1f8a60" stroke-width="1.500"/><path d="M808 611L842 621" stroke="#28a0c8" stroke-width="1.500"/>
<path d="M537 607L535 641" stroke="#1a9cc4" stroke-width="2.500"/><path d="M578 623V641" stroke="#17448e" stroke-width="2.500"/><path d="M624 622V641" stroke="#3d0e55" stroke-width="3"/><path d="M667 621V641" stroke="#c04a10" stroke-width="3"/><path d="M705 620H714V641L705 637Z" fill="#9c8414"/>
${steps.map(([y,a,b,h,c])=>poly(`${a+1},${y-h/2-1} ${b},${y-h/2} ${b-1},${y+h/2+1} ${a},${y+h/2-1}`,c)).join('')}
<ellipse cx="957" cy="1100" rx="36" ry="8" fill="none" stroke="#bdbdbd" stroke-width="6"/>
${poly('936,1068 957,1067 957,1103 936,1098','#74b878')}${poly('957,1067 978,1068 978,1098 957,1103','#ff7c7c')}<path d="M957 1067V1103" stroke="#fff"/>
<g fill="#fff" font-family="Open Sans" font-size="20" text-anchor="middle"><text x="946" y="1092">R</text><text x="968" y="1092">F</text></g></svg>`);

define('hui-window',`:host{display:flex;flex-direction:column;background:#fff;box-shadow:0 0 6px rgba(60,60,60,.45);font:14px "Open Sans",sans-serif;color:#111}
header{display:flex;align-items:center;height:37px;background:#808080;color:#fff;font-size:19px;padding:0 14px 2px 11px;white-space:nowrap}
header span{flex:1}header button{all:unset;margin-left:29px;display:flex}
.b{flex:1;display:flex;min-height:0}.c{flex:1;display:flex;flex-direction:column;min-width:0}
.s{display:flex;align-items:center;gap:7px;height:50px;padding:0 27px 0 28px}
.s label,.s output{white-space:nowrap}
.k{display:flex;align-items:center;gap:8px;height:37px;padding:0 0 4px 19px;white-space:nowrap}
.k input{appearance:none;margin:0;width:22px;height:22px;border:1px solid #c4c4c4;background:#fff}
input[type=range]{appearance:none;flex:1;margin:0 0 10px;height:20px;background:linear-gradient(90deg,#41b1e1 9%,#999 9%) center/100% 4px no-repeat;min-width:0}
input[type=range]::-webkit-slider-thumb{appearance:none;width:11px;height:20px;border-radius:3px;background:#8f8f8f;box-shadow:0 0 0 2px #fff}
.bar{width:18px;display:flex;flex-direction:column;align-items:center;padding:8px 1px 7px 0}
.bar i{width:16px;flex:1;background:#b9b9b9;margin:72px 0 21px}
.bar svg{display:block}`,
`<header><span>APROPRIAÇÃO DE COBERTURAS POR MÉTODOS GENERATIVOS – DE DESVÃO A ÁGUA-FURTADA</span>
<button aria-label="Minimize"><svg width="12" height="12"><path d="M0 8h12v4H0z" fill="#ccc"/></svg></button><button aria-label="Maximize"><svg width="13" height="12"><path d="M.5 1h11v10H.5z" fill="none" stroke="#ccc"/><path d="M0 0h12v4H0z" fill="#ccc"/></svg></button><button aria-label="Close"><svg width="14" height="12"><path d="M1 0L13 12M13 0L1 12" stroke="#ccc" stroke-width="2.500"/></svg></button></header>
<div class="b"><div class="c"><div class="s"><label for="r">Raio topo claraboia</label><input id="r" type="range" min="0" max="7" step=".001" value=".622"><output for="r">0.629</output></div>
<div class="k"><input id="k" type="checkbox"><label for="k">Escada sem clarabóia?</label></div><model-view></model-view></div>
<div class="bar"><svg width="12" height="7"><path d="M0 7L6 0L12 7z" fill="#222"/></svg><i></i><svg width="12" height="7"><path d="M0 0L6 7L12 0z" fill="#222"/></svg></div></div>`);

/* ---------- Slider dialog ---------- */
define('digit-row',`:host{display:flex;align-items:center;height:25px;border:2px solid #111;background:#f0f0f0;font-size:14px;padding-left:4px}
b{font-weight:400;flex:1;font-size:13px}em{font-style:normal;width:9px}
span{width:16px;text-align:center;color:#cfcfcf;border-right:1px solid #dadada;line-height:20px}span:last-child{border:0}
span.a{color:#111;background:#f9f9f9}`,
el=>{const v=el.getAttribute('value');return `<b>${el.getAttribute('label')||''}</b><em>${el.hasAttribute('sign')?'+':''}</em>`+v.padStart(12,'0').split('').map((c,i)=>`<span class="${i>=12-v.length?'a':''}">${c}</span>`).join('')});
define('group-box',`:host{display:block}fieldset{margin:0;padding:0 4px;border:1px solid #dcdcdc;min-width:0;height:100%}legend{margin-left:2px;padding:0 4px;line-height:14px;font-size:13px}div{display:flex;flex-direction:column}`,
el=>`<fieldset><legend>${el.getAttribute('label')}</legend><div><slot></slot></div></fieldset>`);
const digitTicks=[0,1,2,3,4,5,6].map(i=>`M${i*28.500+.5} 0v6`).join('');
const valTicks=Array.from({length:21},(_,i)=>`M${i*13.500+.5} ${i%5?4:0}V8`).join('');
define('slider-dialog',`:host{display:flex;flex-direction:column;background:#f0f0f0;border:1px solid #c79a6c;box-shadow:3px 6px 18px rgba(40,20,80,.5);font-size:13px;color:#111}
header{display:flex;align-items:center;height:32px;background:#fff;padding:0 22px 0 4px;font-size:14px}header span{flex:1}
button{all:unset;text-align:center}header button{margin-left:45px;font-size:16px}
.g{margin:0 7px 0 6px}
.f{display:flex;align-items:center;height:27px;padding-left:4px}.f label,.f .l{width:105px}
.f input:not(.r),.f select{width:208px;height:25px;border:1px solid #7a7a7a;background:#fff;margin:0;min-width:0}
.cb{position:relative}.f .cb select{appearance:none;background:#e1e1e1;border-color:#adadad;font:13px "Liberation Sans";padding:0 5px;display:block}.cb svg{position:absolute;right:5px;top:10px}
.ro{height:42px;padding:0 0 6px 6px}.ro .l{width:108px}.ro button{width:41px;height:30px;margin-right:10px;font:700 31px/31px "Liberation Serif",serif;color:#333}.ro .on{background:#bcdcf4;box-shadow:inset 0 0 0 1px #8cb8dc}
.di{padding-left:6px;height:24px}.tr{position:relative;display:block;margin-left:15px;line-height:0}
.th{position:absolute;background:#fff;border:1px solid #999;color:#999;text-align:center}
input.r{position:absolute;opacity:0;inset:0;width:100%;margin:0}
digit-row{margin-bottom:2px}
.v{height:28px;border:2px solid #111;position:relative;padding:4px 0 0 20px}.v:before{content:"";position:absolute;inset:1px;border:1px dotted #111}
.v .th{left:234px;top:1px;width:40px;height:22px;border:2px solid #111;color:#111;font-size:14px;line-height:18px}
.bt{display:flex;gap:3px;justify-content:flex-end;margin:7px 7px 0 0}.bt button{width:95px;height:26px;line-height:26px;background:#e1e1e1;border:1px solid #adadad;font-size:14px}
`,
`<header><span>Slider:</span><button aria-label="Help">?</button><button aria-label="Close"><svg width="13" height="13"><path d="M0 0L13 13M13 0L0 13" stroke="#111" stroke-width="1.200"/></svg></button></header>
<group-box class="g" label="Properties" style="margin-top:7px;height:107px"><div class="f" style="margin-top:4px"><label for="n">Name</label><input id="n"></div><div class="f"><label for="e">Expression</label><input id="e"></div><div class="f"><label for="s">Grip Style</label><div class="cb"><select id="s"><option>Shape &amp; Text</option></select><svg width="11" height="7"><path d="M1 1l4.500 4.500L10 1" fill="none" stroke="#444"/></svg></div></div></group-box>
<group-box class="g" label="Slider accuracy" style="margin-top:15px;height:97px"><div class="f ro" style="margin-top:3px"><span class="l">Rounding</span><button>R</button><button class="on">N</button><button>E</button><button>O</button></div><div class="f di"><label for="dg">Digits</label><div class="tr"><svg width="173" height="8"><path d="${digitTicks}M0 6.500H172" stroke="#bbb" fill="none"/></svg><span class="th" style="left:72px;top:-6px;width:26px;height:22px;line-height:20px;font-size:14px">3</span><input class="r" id="dg" type="range" max="6" value="3"></div></div></group-box>
<group-box class="g" label="Numeric domain" style="margin-top:14px;height:107px"><digit-row label="Min" sign value="0" style="margin-top:7px"></digit-row><digit-row label="Max" sign value="1000"></digit-row><digit-row label="Range" value="1000"></digit-row></group-box>
<group-box class="g" label="Numeric value" style="margin-top:16px;height:85px"><digit-row value="870" style="margin-top:7px"></digit-row><div class="v"><svg width="272" height="10"><path d="${valTicks}M0 8.500H271" stroke="#999" fill="none"/></svg><span class="th">870</span><input class="r" aria-label="Value" type="range" max="1000" value="870"></div></group-box>
<div class="bt"><button>OK</button><button>Cancel</button></div>`);

/* ---------- desktop ---------- */
define('desk-top',`:host{display:flex;flex-direction:column;height:100vh;position:relative;background:#000}
main{flex:1;display:flex;gap:1px;padding:10px 11px 0 10px;min-height:0}
footer{height:10px;background:#0c0906;display:flex;justify-content:space-between}
hui-window{position:absolute;left:37px;top:62px;width:1240px;height:1070px}
slider-dialog{position:absolute;left:1436px;top:580px;width:341px;height:525px}
.cur{position:absolute;left:1556px;top:1030px;pointer-events:none}`,
`<main><rhino-window></rhino-window><gh-window></gh-window></main><footer><svg width="440" height="10"><path d="M376 0h44v10h-44z" fill="#333"/><path d="M34 8h8v2h-8zM77 8h6v2h-6z" fill="#ddd"/><path d="M296 8h15v2h-15z" fill="#7a1a1a"/><path d="M347 8h8v2h-8z" fill="#2a5aa8"/></svg><svg width="320" height="10"><path d="M3 9h19v1h-19z" fill="#86a"/><path d="M34 9h16v1h-16z" fill="#777"/><path d="M63 9h17v1h-17z" fill="#e55"/><path d="M93 9h17v1h-17z" fill="#66b"/></svg></footer>
<hui-window></hui-window><slider-dialog></slider-dialog>
<svg class="cur" width="72" height="72"><circle cx="36" cy="36" r="35" fill="#777" fill-opacity=".6"/><path d="M36 36V57L41 52L45 60L49 58L45 51H51Z" fill="#fff" stroke="#222"/></svg>`);
</script>
</body>
</html>
